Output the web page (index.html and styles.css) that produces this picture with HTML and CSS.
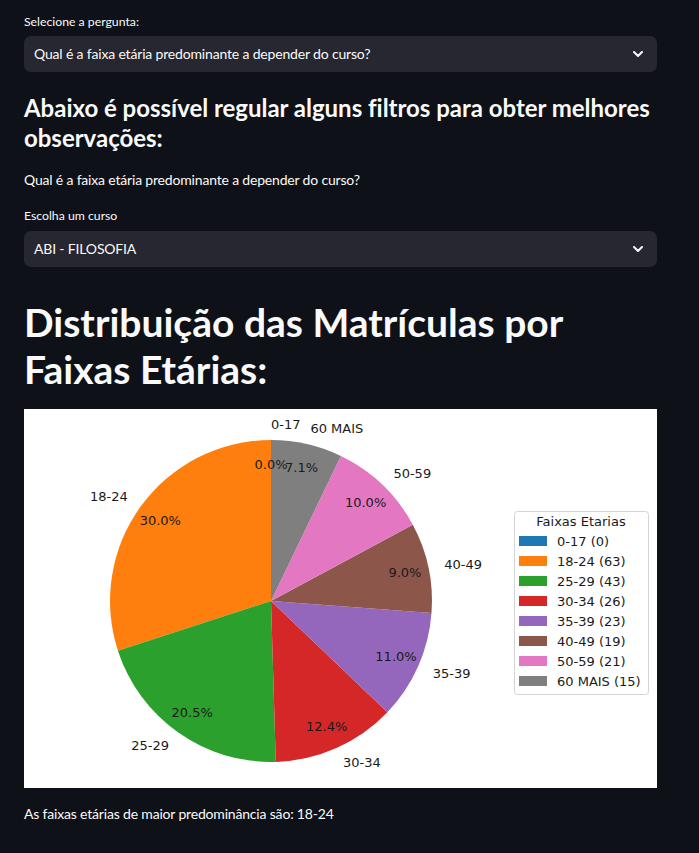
FILE: index.html
```html
<!DOCTYPE html>
<html lang="pt">
<head>
<meta charset="utf-8">
<title>Faixas Etárias</title>
<link rel="stylesheet" href="styles.css">
</head>
<body>
<main class="main">
  <label class="label label-first">Selecione a pergunta:</label>
  <div class="select">
    <span class="select-value">Qual é a faixa etária predominante a depender do curso?</span>
    <svg class="chevron" width="10" height="6" viewBox="0 0 10 6"><polyline points="1,1 5,5 9,1" fill="none" stroke="#fafafa" stroke-width="2" stroke-linecap="round" stroke-linejoin="round"/></svg>
  </div>

  <h3 class="h3">Abaixo é possível regular alguns filtros para obter melhores observações:</h3>
  <p class="text text-question">Qual é a faixa etária predominante a depender do curso?</p>

  <label class="label label-second">Escolha um curso</label>
  <div class="select">
    <span class="select-value">ABI - FILOSOFIA</span>
    <svg class="chevron" width="10" height="6" viewBox="0 0 10 6"><polyline points="1,1 5,5 9,1" fill="none" stroke="#fafafa" stroke-width="2" stroke-linecap="round" stroke-linejoin="round"/></svg>
  </div>

  <h1 class="h1">Distribuição das Matrículas por Faixas Etárias:</h1>

  <div class="chart">
    <svg class="chart-svg" width="633" height="379" viewBox="0 0 633 379">
      <g class="wedges">
        <path d="M247,192 L247,31 A161,161 0 0 0 93.9,241.7 Z" fill="#ff7f0e"/>
        <path d="M247,192 L93.9,241.7 A161,161 0 0 0 251.8,352.9 Z" fill="#2ca02c"/>
        <path d="M247,192 L251.8,352.9 A161,161 0 0 0 363.4,303.3 Z" fill="#d62728"/>
        <path d="M247,192 L363.4,303.3 A161,161 0 0 0 407.5,204.0 Z" fill="#9467bd"/>
        <path d="M247,192 L407.5,204.0 A161,161 0 0 0 388.8,115.7 Z" fill="#8c564b"/>
        <path d="M247,192 L388.8,115.7 A161,161 0 0 0 316.9,46.9 Z" fill="#e377c2"/>
        <path d="M247,192 L316.9,46.9 A161,161 0 0 0 247,31 Z" fill="#7f7f7f"/>
      </g>
      <g class="plot-text">
        <text x="247" y="15" text-anchor="start">0-17</text>
        <text x="286.4" y="19.3" text-anchor="start">60 MAIS</text>
        <text x="369.4" y="64" text-anchor="start">50-59</text>
        <text x="420.2" y="155.2" text-anchor="start">40-49</text>
        <text x="408.8" y="264" text-anchor="start">35-39</text>
        <text x="319" y="353.8" text-anchor="start">30-34</text>
        <text x="145" y="336.8" text-anchor="end">25-29</text>
        <text x="103.7" y="87.9" text-anchor="end">18-24</text>

        <text x="247" y="55" text-anchor="middle">0.0%</text>
        <text x="277.5" y="58.6" text-anchor="middle">7.1%</text>
        <text x="341.6" y="93.1" text-anchor="middle">10.0%</text>
        <text x="380.9" y="163.5" text-anchor="middle">9.0%</text>
        <text x="372" y="247.7" text-anchor="middle">11.0%</text>
        <text x="302.7" y="317" text-anchor="middle">12.4%</text>
        <text x="168.2" y="303.9" text-anchor="middle">20.5%</text>
        <text x="136.3" y="111.6" text-anchor="middle">30.0%</text>
      </g>
      <g class="legend">
        <rect x="490.5" y="102.5" width="134" height="183" rx="3" fill="#ffffff" fill-opacity="0.8" stroke="#d4d4d4" stroke-width="1"/>
        <text class="legend-title" x="557" y="112" text-anchor="middle">Faixas Etarias</text>
        <rect x="495" y="127" width="28" height="10" fill="#1f77b4"/>
        <text x="533" y="132">0-17 (0)</text>
        <rect x="495" y="147" width="28" height="10" fill="#ff7f0e"/>
        <text x="533" y="152">18-24 (63)</text>
        <rect x="495" y="167" width="28" height="10" fill="#2ca02c"/>
        <text x="533" y="172">25-29 (43)</text>
        <rect x="495" y="187" width="28" height="10" fill="#d62728"/>
        <text x="533" y="192">30-34 (26)</text>
        <rect x="495" y="207" width="28" height="10" fill="#9467bd"/>
        <text x="533" y="212">35-39 (23)</text>
        <rect x="495" y="227" width="28" height="10" fill="#8c564b"/>
        <text x="533" y="232">40-49 (19)</text>
        <rect x="495" y="247" width="28" height="10" fill="#e377c2"/>
        <text x="533" y="252">50-59 (21)</text>
        <rect x="495" y="267" width="28" height="10" fill="#7f7f7f"/>
        <text x="533" y="272">60 MAIS (15)</text>
      </g>
    </svg>
  </div>

  <p class="text text-result">As faixas etárias de maior predominância são: 18-24</p>
</main>
</body>
</html>
```

FILE: styles.css
```css
html, body {
  margin: 0;
  padding: 0;
  background: #0e1117;
}

body {
  color: #fafafa;
  font-family: Lato, "Open Sans", "Noto Sans", sans-serif;
  -webkit-font-smoothing: antialiased;
}

.main {
  width: 633px;
  margin-left: 24px;
  display: flex;
  flex-direction: column;
}

.label {
  display: block;
  font-size: 12.25px;
  line-height: 16px;
  height: 16px;
}

.label-first {
  margin-top: 14px;
  margin-bottom: 6px;
}

.label-second {
  margin-top: 18px;
  margin-bottom: 7px;
}

.select {
  height: 36px;
  background: #262730;
  border-radius: 7px;
  display: flex;
  align-items: center;
  justify-content: space-between;
  padding: 0 14px 0 10px;
  box-sizing: border-box;
}

.select-value {
  font-size: 14px;
  line-height: 20px;
  letter-spacing: -0.17px;
}

.chevron {
  display: block;
}

.h3 {
  margin: 20.5px 0 0 0;
  font-size: 24px;
  line-height: 30px;
  font-weight: 700;
  letter-spacing: -0.02px;
}

.text {
  margin: 0;
  font-size: 14px;
  line-height: 20px;
  letter-spacing: -0.18px;
}

.text-question {
  margin-top: 17.5px;
}

.h1 {
  margin: 31.5px 0 0 0;
  font-size: 39px;
  line-height: 47px;
  font-weight: 700;
}

.chart {
  margin-top: 16.5px;
  width: 633px;
  height: 379px;
  background: #ffffff;
}

.chart-svg {
  display: block;
}

.chart-svg text {
  font-family: "DejaVu Sans", sans-serif;
  font-size: 13px;
  fill: #1a1a1a;
  dominant-baseline: central;
}

.text-result {
  margin-top: 16px;
}
```
